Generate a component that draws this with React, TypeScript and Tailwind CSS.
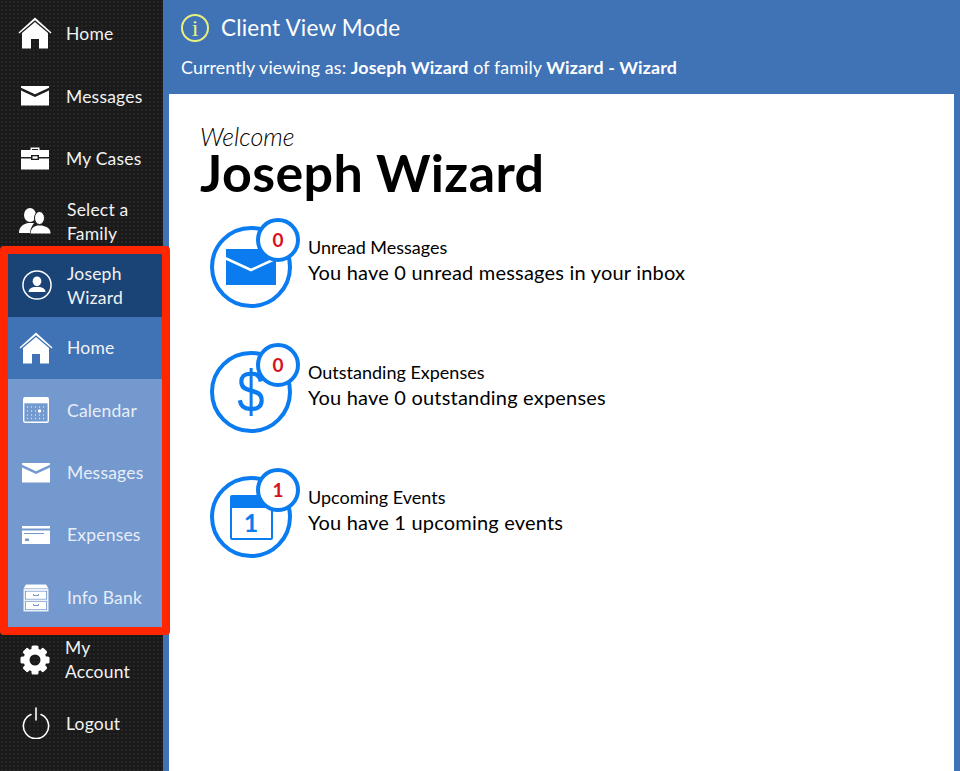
const font = "font-['Lato','Noto_Sans',sans-serif]";

type IconProps = { className?: string };

const House = ({ className }: IconProps) => (
  <svg viewBox="0 0 34 32" className={className} fill="white">
    <path d="M17 0.5 L33.5 15.5 L32.6 16.6 L17 3.2 L1.4 16.6 L0.5 15.5 Z" />
    <path d="M17 5 L30 16 V31.5 H21 V22 H13 V31.5 H4 V16 Z" />
  </svg>
);
const Envelope = ({ className }: IconProps) => (
  <svg viewBox="0 0 28 20" className={className} fill="white">
    <path d="M0 0 H28 V1.8 L14 8.2 L0 1.8 Z" />
    <path d="M0 4.4 L14 11 L28 4.4 V19.5 H0 Z" />
  </svg>
);
const Briefcase = ({ className }: IconProps) => (
  <svg viewBox="0 0 28 23" className={className} fill="white">
    <path d="M9.5 3 V0.5 H18.5 V3 H17 V2 H11 V3 Z" />
    <path d="M0 3 H28 V10 H18 V8 H10 V10 H0 Z" />
    <path d="M0 11.5 H10 V13 H18 V11.5 H28 V22.5 H0 Z" />
    <rect x="11.5" y="9.3" width="5" height="2.4" />
  </svg>
);
const People = ({ className }: IconProps) => (
  <svg viewBox="0 0 32 26" className={className} fill="white">
    <ellipse cx="11" cy="7" rx="6" ry="7" />
    <path d="M0 25 C0 19 4 16 9 15 L15 15 C13 18 11 21 11 25 Z" />
    <ellipse cx="20.5" cy="10" rx="5" ry="6.5" stroke="#1a1a1a" strokeWidth="1" />
    <path d="M11.5 25.5 C12 20 15 18.5 18 17.5 H23 C27 18.5 31.5 20 31.5 25.5 Z" />
  </svg>
);
const UserCircle = ({ className }: IconProps) => (
  <svg viewBox="0 0 32 32" className={className} fill="white">
    <circle cx="16" cy="16" r="15" fill="none" stroke="white" strokeWidth="1.6" />
    <ellipse cx="16" cy="12" rx="4.6" ry="5.2" />
    <path d="M7 23.5 C7 20 9.5 18.8 13 18 H19 C22.5 18.8 25 20 25 23.5 Z" />
  </svg>
);
const Calendar = ({ className }: IconProps) => (
  <svg viewBox="0 0 26 26" className={className}>
    <rect x="0.7" y="0.7" width="24.6" height="24.6" rx="1.5" fill="none" stroke="white" strokeWidth="1.4" />
    <rect x="0.7" y="0.7" width="24.6" height="5.6" fill="white" />
    {[10, 14, 18, 21.5].map((y) =>
      [4.5, 8.5, 12.5, 16.5, 20.5].map((x) => (
        <circle key={`${x}-${y}`} cx={x} cy={y} r="0.7" fill="white" fillOpacity="0.75" />
      )),
    )}
    <circle cx="16.5" cy="14" r="1.7" fill="white" />
  </svg>
);
const Card = ({ className }: IconProps) => (
  <svg viewBox="0 0 28 18" className={className} fill="white">
    <path d="M0 0 H28 V2.5 H0 Z" />
    <path d="M0 4.5 H28 V18 H0 Z M2 7 V8 H22 V7 Z M3 12.5 V15 H7 V12.5 Z" fillRule="evenodd" />
  </svg>
);
const Cabinet = ({ className }: IconProps) => (
  <svg viewBox="0 0 26 28" className={className} fill="white">
    <path d="M3 0.5 H23 L25.5 4.5 H0.5 Z" />
    <path
      fillRule="evenodd"
      d="M0.5 5 H25.5 V27.5 H0.5 Z M2 7 V15.5 H24 V7 Z M2 17 V26 H24 V17 Z"
      fillOpacity="0.85"
    />
    <rect x="2.8" y="7.6" width="20.4" height="7.2" />
    <rect x="2.8" y="17.7" width="20.4" height="7.6" />
    <path d="M10.5 10 V11.5 H15.5 V10" fill="none" stroke="#7399cc" strokeWidth="1" />
    <path d="M10.5 20 V21.5 H15.5 V20" fill="none" stroke="#7399cc" strokeWidth="1" />
  </svg>
);
const Gear = ({ className }: IconProps) => (
  <svg viewBox="0 0 30 30" className={className}>
    <g fill="white">
      {[0, 45, 90, 135, 180, 225, 270, 315].map((a) => (
        <rect key={a} x="11.5" y="0.5" width="7" height="8" rx="1.6" transform={`rotate(${a} 15 15)`} />
      ))}
    </g>
    <circle cx="15" cy="15" r="8.5" fill="none" stroke="white" strokeWidth="6" />
  </svg>
);
const Power = ({ className }: IconProps) => (
  <svg viewBox="0 0 28 32" className={className} fill="none" stroke="white" strokeWidth="1.6" strokeLinecap="round">
    <path d="M9 7.5 A12.6 12.6 0 1 0 19 7.5" />
    <path d="M14 1 V13" />
  </svg>
);

function NavRow({
  icon,
  label,
  textClass = "",
  iconClass = "pl-[4px]",
  bg = "",
  text = "text-[#f2f2f2]",
}: {
  icon: React.ReactNode;
  label: React.ReactNode;
  textClass?: string;
  iconClass?: string;
  bg?: string;
  text?: string;
}) {
  return (
    <div className={`flex h-[62.5px] items-center ${bg}`}>
      <div className={`flex w-[66px] shrink-0 justify-center ${iconClass}`}>{icon}</div>
      <div className={`text-[17.5px] leading-[24px] tracking-[0.2px] ${text} ${textClass}`}>{label}</div>
    </div>
  );
}

function Badge({ n }: { n: string }) {
  return (
    <div className="absolute left-[42px] top-[-12px] flex h-[44px] w-[44px] items-center justify-center rounded-full border-[4px] border-[#0a7cf0] bg-white text-[19px] font-bold text-[#d8101c]">
      {n}
    </div>
  );
}

function Stat({
  icon,
  n,
  title,
  body,
}: {
  icon: React.ReactNode;
  n: string;
  title: string;
  body: string;
}) {
  return (
    <div className="flex h-[82px] items-center">
      <div className="relative flex h-[82px] w-[82px] shrink-0 items-center justify-center rounded-full border-[4px] border-[#0a7cf0]">
        {icon}
        <Badge n={n} />
      </div>
      <div className="pb-[14px] pl-[16px] text-black">
        <div className="text-[18px] leading-[25px]">{title}</div>
        <div className="text-[20px] leading-[25px] tracking-[0.2px]">{body}</div>
      </div>
    </div>
  );
}

export default function App() {
  const lightText = "text-[#e8eef8]";
  const lightBg = "bg-[#7399cf]";
  return (
    <div className={`relative flex h-[771px] w-[960px] overflow-hidden bg-[#4072b6] ${font}`}>
      <aside className="flex h-full w-[163px] shrink-0 flex-col bg-[#1a1a1a] bg-[radial-gradient(#262626_1px,transparent_1px)] bg-[length:4px_4px] pt-[2px]">
        <NavRow icon={<House className="h-[32px] w-[34px]" />} label="Home" textClass="pt-[2px]" />
        <NavRow icon={<Envelope className="h-[20px] w-[28px]" />} label="Messages" textClass="pt-[2px]" />
        <NavRow icon={<Briefcase className="h-[23px] w-[28px]" />} label="My Cases" textClass="pt-[2px]" />
        <NavRow icon={<People className="h-[26px] w-[32px]" />} label={<span>Select a<br />Family</span>} textClass="pl-[1px] pt-[3px]" />
        <div className="mt-[2px]">
          <NavRow icon={<UserCircle className="h-[30px] w-[30px]" />} iconClass="pl-[8px]" label={<span>Joseph<br />Wizard</span>} bg="bg-[#1b4476]" textClass="pl-[1px] pt-[1px]" />
          <NavRow icon={<House className="h-[32px] w-[34px]" />} iconClass="pl-[6px]" label="Home" bg="bg-[#4072b6]" textClass="pl-[1px]" />
          <NavRow icon={<Calendar className="h-[26px] w-[26px]" />} iconClass="pl-[6px]" label="Calendar" bg={lightBg} text={lightText} textClass="pl-[1px] pt-[1px]" />
          <NavRow icon={<Envelope className="h-[20px] w-[28px]" />} iconClass="pl-[6px]" label="Messages" bg={lightBg} text={lightText} textClass="pl-[1px]" />
          <NavRow icon={<Card className="h-[18px] w-[28px]" />} iconClass="pl-[6px]" label="Expenses" bg={lightBg} text={lightText} textClass="pl-[1px]" />
          <NavRow icon={<Cabinet className="h-[28px] w-[26px]" />} iconClass="pl-[6px]" label="Info Bank" bg={lightBg} text={lightText} textClass="pl-[1px]" />
        </div>
        <NavRow icon={<Gear className="h-[30px] w-[30px]" />} label={<span>My<br />Account</span>} textClass="-ml-[1px]" />
        <NavRow icon={<Power className="h-[32px] w-[28px]" />} iconClass="pl-[6px]" label="Logout" textClass="pt-[2px]" />
      </aside>

      <main className="flex min-w-0 flex-1 flex-col">
        <header className="h-[94px] shrink-0 pl-[18px] pt-[13px] text-white">
          <div className="flex h-[30px] items-center">
            <div className="flex h-[28px] w-[28px] items-center justify-center rounded-full border-2 border-[#e9f07c] font-['Liberation_Serif',serif] text-[24px] leading-none text-[#e9f07c]">
              i
            </div>
            <div className="pl-[12px] text-[22.5px] tracking-[0.2px]">Client View Mode</div>
          </div>
          <div className="pt-[12px] text-[17.85px] leading-[24px] tracking-[0.1px]">
            Currently viewing as: <b>Joseph Wizard</b> of family <b>Wizard - Wizard</b>
          </div>
        </header>
        <section className="mx-[6px] flex-1 bg-white pl-[31px] pt-[28px] text-black">
          <div className="text-[25px] font-light italic leading-[28px]">Welcome</div>
          <div className="text-[52px] font-bold leading-[44px] tracking-[0.4px]">Joseph Wizard</div>
          <div className="flex flex-col gap-[43px] pl-[10px] pt-[32px]">
            <Stat
              n="0"
              title="Unread Messages"
              body="You have 0 unread messages in your inbox"
              icon={
                <svg viewBox="0 0 50 36" className="h-[36px] w-[50px]" fill="#0a7cf0">
                  <path d="M0 0 L50 0 V36 H0 Z" />
                  <path d="M-1 9 L25 21 L51 9" fill="none" stroke="white" strokeWidth="2.6" />
                </svg>
              }
            />
            <Stat
              n="0"
              title="Outstanding Expenses"
              body="You have 0 outstanding expenses"
              icon={<span className="scale-y-[1.2] font-['Liberation_Sans',sans-serif] text-[49px] leading-none text-[#0a7cf0]">$</span>}
            />
            <Stat
              n="1"
              title="Upcoming Events"
              body="You have 1 upcoming events"
              icon={
                <div className="flex h-[45px] w-[43px] flex-col rounded-[2px] border-[2px] border-[#0a7cf0]">
                  <div className="h-[11px] bg-[#0a7cf0]" />
                  <div className="flex flex-1 items-center justify-center text-[25px] font-bold leading-none text-[#0a7cf0]">
                    1
                  </div>
                </div>
              }
            />
          </div>
        </section>
      </main>

      <div className="absolute left-0 top-[246px] h-[389px] w-[170px] rounded-[4px] border-[8px] border-[#ff2600]" />
    </div>
  );
}
